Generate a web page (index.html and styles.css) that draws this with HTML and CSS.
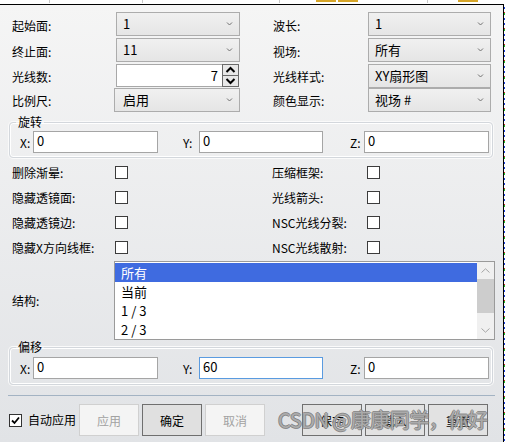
FILE: index.html
```html
<!DOCTYPE html>
<html>
<head>
<meta charset="utf-8">
<link rel="stylesheet" href="styles.css">
</head>
<body>
<div class="strip">
  <i class="tk tk1"></i><i class="tk tk2"></i><i class="tk tk3"></i><i class="gd gd1"></i><i class="gd gd2"></i><i class="tk tk4"></i><i class="gd gd3"></i>
</div>
<div class="frame">
  <div class="panel">
    <div class="top">
      <span class="lbl">起始面:</span>
      <div class="combo"><span>1</span><svg class="chev" width="7" height="4" viewBox="0 0 7 4"><path d="M1 0.5 L3.5 3 L6 0.5" fill="none" stroke="#707070" stroke-width="1"/></svg></div>
      <span class="lbl r">波长:</span>
      <div class="combo"><span>1</span><svg class="chev" width="7" height="4" viewBox="0 0 7 4"><path d="M1 0.5 L3.5 3 L6 0.5" fill="none" stroke="#707070" stroke-width="1"/></svg></div>

      <span class="lbl">终止面:</span>
      <div class="combo"><span>11</span><svg class="chev" width="7" height="4" viewBox="0 0 7 4"><path d="M1 0.5 L3.5 3 L6 0.5" fill="none" stroke="#707070" stroke-width="1"/></svg></div>
      <span class="lbl r">视场:</span>
      <div class="combo"><span>所有</span><svg class="chev" width="7" height="4" viewBox="0 0 7 4"><path d="M1 0.5 L3.5 3 L6 0.5" fill="none" stroke="#707070" stroke-width="1"/></svg></div>

      <span class="lbl">光线数:</span>
      <div class="spin"><span class="spin-val">7</span><svg class="spin-btns" width="17" height="23" viewBox="0 0 17 23"><rect x="0.5" y="0.5" width="16" height="11" fill="#e8e8e8" stroke="#6a6a6a"/><rect x="0.5" y="11.5" width="16" height="11" fill="#e8e8e8" stroke="#6a6a6a"/><path d="M4.5 8 L8.5 4 L12.5 8" fill="none" stroke="#000" stroke-width="2"/><path d="M4.5 15 L8.5 19 L12.5 15" fill="none" stroke="#000" stroke-width="2"/></svg></div>
      <span class="lbl r">光线样式:</span>
      <div class="combo"><span>XY扇形图</span><svg class="chev" width="7" height="4" viewBox="0 0 7 4"><path d="M1 0.5 L3.5 3 L6 0.5" fill="none" stroke="#707070" stroke-width="1"/></svg></div>

      <span class="lbl">比例尺:</span>
      <div class="combo wide"><span>启用</span><svg class="chev" width="7" height="4" viewBox="0 0 7 4"><path d="M1 0.5 L3.5 3 L6 0.5" fill="none" stroke="#707070" stroke-width="1"/></svg></div>
      <span class="lbl r">颜色显示:</span>
      <div class="combo"><span>视场 #</span><svg class="chev" width="7" height="4" viewBox="0 0 7 4"><path d="M1 0.5 L3.5 3 L6 0.5" fill="none" stroke="#707070" stroke-width="1"/></svg></div>
    </div>

    <fieldset class="grp grp-rot">
      <legend>旋转</legend>
      <div class="coords">
        <div class="pair p1"><span class="lx">X:</span><div class="inp">0</div></div>
        <div class="pair p2"><span class="ly">Y:</span><div class="inp inp-y">0</div></div>
        <div class="pair"><span class="lz">Z:</span><div class="inp">0</div></div>
      </div>
    </fieldset>

    <div class="checks">
      <span class="lbl">删除渐晕:</span><span class="cb"></span><span class="lbl r2">压缩框架:</span><span class="cb"></span>
      <span class="lbl">隐藏透镜面:</span><span class="cb"></span><span class="lbl r2">光线箭头:</span><span class="cb"></span>
      <span class="lbl">隐藏透镜边:</span><span class="cb"></span><span class="lbl r2">NSC光线分裂:</span><span class="cb"></span>
      <span class="lbl">隐藏X方向线框:</span><span class="cb"></span><span class="lbl r2">NSC光线散射:</span><span class="cb"></span>
    </div>

    <div class="list-row">
      <span class="list-lbl">结构:</span>
      <div class="listbox">
        <div class="items">
          <div class="item sel">所有</div>
          <div class="item">当前</div>
          <div class="item">1 / 3</div>
          <div class="item">2 / 3</div>
        </div>
        <div class="vscroll">
          <div class="sbtn"><svg width="9" height="5" viewBox="0 0 9 5"><path d="M0.5 4.5 L4.5 0.8 L8.5 4.5" fill="none" stroke="#a6a6a6" stroke-width="1"/></svg></div>
          <div class="thumb"></div>
          <div class="track"></div>
          <div class="sbtn"><svg width="9" height="5" viewBox="0 0 9 5"><path d="M0.5 0.5 L4.5 4.2 L8.5 0.5" fill="none" stroke="#a6a6a6" stroke-width="1"/></svg></div>
        </div>
      </div>
    </div>

    <fieldset class="grp grp-off">
      <legend>偏移</legend>
      <div class="coords">
        <div class="pair p1"><span class="lx">X:</span><div class="inp">0</div></div>
        <div class="pair p2"><span class="ly">Y:</span><div class="inp inp-y focus">60</div></div>
        <div class="pair"><span class="lz">Z:</span><div class="inp">0</div></div>
      </div>
    </fieldset>

    <div class="sep"></div>

    <div class="bottom">
      <span class="cb checked"><svg width="11" height="11" viewBox="0 0 11 11"><path d="M2 5.5 L4.5 8 L9 2.5" fill="none" stroke="#000" stroke-width="1.8"/></svg></span>
      <span class="auto">自动应用</span>
      <div class="btns">
        <span class="btn dis">应用</span>
        <span class="btn def">确定</span>
        <span class="btn dis">取消</span>
      </div>
      <div class="btns right">
        <span class="btn">保存</span>
        <span class="btn">载入</span>
        <span class="btn">重置</span>
      </div>
    </div>

    <div class="watermark">CSDN @康康同学，你好</div>
  </div>
  <div class="edge"></div>
</div>
</body>
</html>
```
FILE: styles.css
```css
* { box-sizing: border-box; }
body {
  margin: 0;
  width: 505px;
  height: 442px;
  overflow: hidden;
  background: #fff;
  font-family: "Noto Sans CJK SC", "Noto Sans", sans-serif;
  font-size: 12px;
  color: #000;
}
.strip { height: 4px; display: flex; align-items: flex-start; background: #fff; }
.tk { display: block; width: 1px; height: 3px; background: #c9c9c9; }
.gd { display: block; width: 20px; height: 2px; background: #d6a528; }
.tk1 { margin-left: 49px; }
.tk2 { margin-left: 92px; }
.tk3 { margin-left: 136px; }
.gd1 { margin-left: 36px; }
.gd2 { margin-left: 2px; }
.tk4 { margin-left: 69px; }
.gd3 { margin-left: 30px; }

.frame { display: flex; height: 438px; }
.panel {
  position: relative;
  width: 504px;
  height: 438px;
  border-top: 1px solid #000;
  border-right: 1px solid #000;
  background: linear-gradient(#f5f5f5, #e1e3e6);
}
.edge {
  width: 1px;
  background: repeating-linear-gradient(to bottom, #fff 0 3px, #1a3fe0 3px 5px, #fff 5px 8px, #e02020 8px 9px, #18c020 9px 11px, #fff 11px 14px, #1a3fe0 14px 16px);
}

.top {
  display: grid;
  grid-template-columns: 104px 124px 33px 95px 123px;
  grid-template-rows: 26px 26px 24px 24px;
  margin-top: 7px;
  padding-left: 12px;
  align-items: start;
}
.lbl { align-self: center; line-height: 16px; white-space: nowrap; }
.top .lbl { margin-top: 1px; }
.top .r { grid-column: 4; }
.combo {
  height: 24px;
  display: flex;
  align-items: center;
  justify-content: space-between;
  padding: 0 6px 0 6px;
  border: 1px solid #acacac;
  background: linear-gradient(#f0f0f0, #e5e5e5);
  font-size: 13px;
  line-height: 18px;
}
.combo.wide { margin-left: -2px; width: 126px; padding-left: 8px; }
.chev { flex: none; }
.spin {
  height: 23px;
  width: 123px;
  display: flex;
  align-items: center;
  justify-content: flex-end;
  border: 1px solid #a8a8a8;
  border-right: none;
  background: #fff;
  font-size: 13px;
}
.spin-val { margin-right: 4px; line-height: 18px; }
.spin-btns { display: block; flex: none; }

.grp {
  margin: 3px 10px 0 9px;
  border: 1px solid #d3d7dc;
  border-radius: 4px;
  box-shadow: inset 0 0 0 1px #fff, 0 0 0 1px #fafafa;
  padding: 2px 0 4px 10px;
  min-width: 0;
}
.grp legend {
  padding: 0 2px;
  margin-left: -4px;
  line-height: 14px;
  font-size: 12px;
}
.grp-off { margin-top: 0; padding-top: 3px; padding-bottom: 5px; }
.coords { display: flex; align-items: center; }
.pair { display: flex; align-items: center; }
.p1 { width: 163px; }
.p2 { width: 167px; }
.lx { width: 13px; }
.ly { width: 16px; }
.lz { width: 14px; }
.inp {
  width: 125px;
  height: 22px;
  border: 1px solid #a5a5a5;
  background: #fff;
  font-size: 13px;
  line-height: 18px;
  padding: 0 0 0 3px;
}
.inp-y { width: 124px; }
.inp.focus { border-color: #5a9be0; }

.checks {
  display: grid;
  grid-template-columns: 103px 13px 144px 95px 13px;
  grid-auto-rows: 25px;
  align-items: center;
  margin-top: 2px;
  padding-left: 12px;
}
.checks .r2 { grid-column: 4; }
.cb {
  display: block;
  width: 13px;
  height: 13px;
  border: 1px solid #3c3c3c;
  background: #fff;
}

.list-row {
  display: flex;
  align-items: center;
  margin-top: 1px;
  padding-left: 12px;
}
.list-lbl { width: 102px; line-height: 16px; }
.listbox {
  width: 381px;
  height: 79px;
  display: flex;
  border: 1px solid #9a9a9a;
  background: #fff;
}
.items { flex: 1; padding-top: 1px; }
.item {
  height: 19px;
  line-height: 19px;
  padding-left: 6px;
  font-size: 13px;
}
.item.sel { background: #3f6be0; color: #fff; }
.vscroll {
  width: 17px;
  display: flex;
  flex-direction: column;
  background: #f0f0f0;
}
.sbtn { height: 17px; display: flex; align-items: center; justify-content: center; }
.thumb { height: 34px; background: #cdcdcd; }
.track { flex: 1; }

.sep {
  margin: 10px 0 0 8px;
  width: 487px;
  height: 1px;
  background: #a3b3c3;
}

.bottom {
  display: flex;
  align-items: center;
  margin-top: 8px;
  padding-left: 9px;
}
.cb.checked { display: flex; align-items: center; justify-content: center; border-color: #333; }
.auto { margin-left: 6px; width: 48px; line-height: 16px; white-space: nowrap; }
.btns { display: flex; gap: 3px; margin-left: 3px; }
.btns.right { margin-left: 37px; }
.btn {
  width: 60px;
  height: 32px;
  display: flex;
  align-items: center;
  justify-content: center;
  border: 1px solid #707070;
  background: #e2e2e2;
  font-size: 12px;
}
.btn.dis { border-color: #d0d0d0; background: #f4f4f4; color: #a2a2a2; }
.btn.def { border-color: #6f6f6f; background: #e0e0e0; }

.watermark {
  position: absolute;
  left: 278px;
  top: 403px;
  font-size: 20px;
  line-height: 24px;
  white-space: nowrap;
  color: rgba(255, 255, 255, 0.4);
  text-shadow: 1px 0 rgba(120,120,120,0.8), -1px 0 rgba(120,120,120,0.8), 0 1px rgba(120,120,120,0.8), 0 -1px rgba(120,120,120,0.8);
  letter-spacing: -0.5px;
}
```
